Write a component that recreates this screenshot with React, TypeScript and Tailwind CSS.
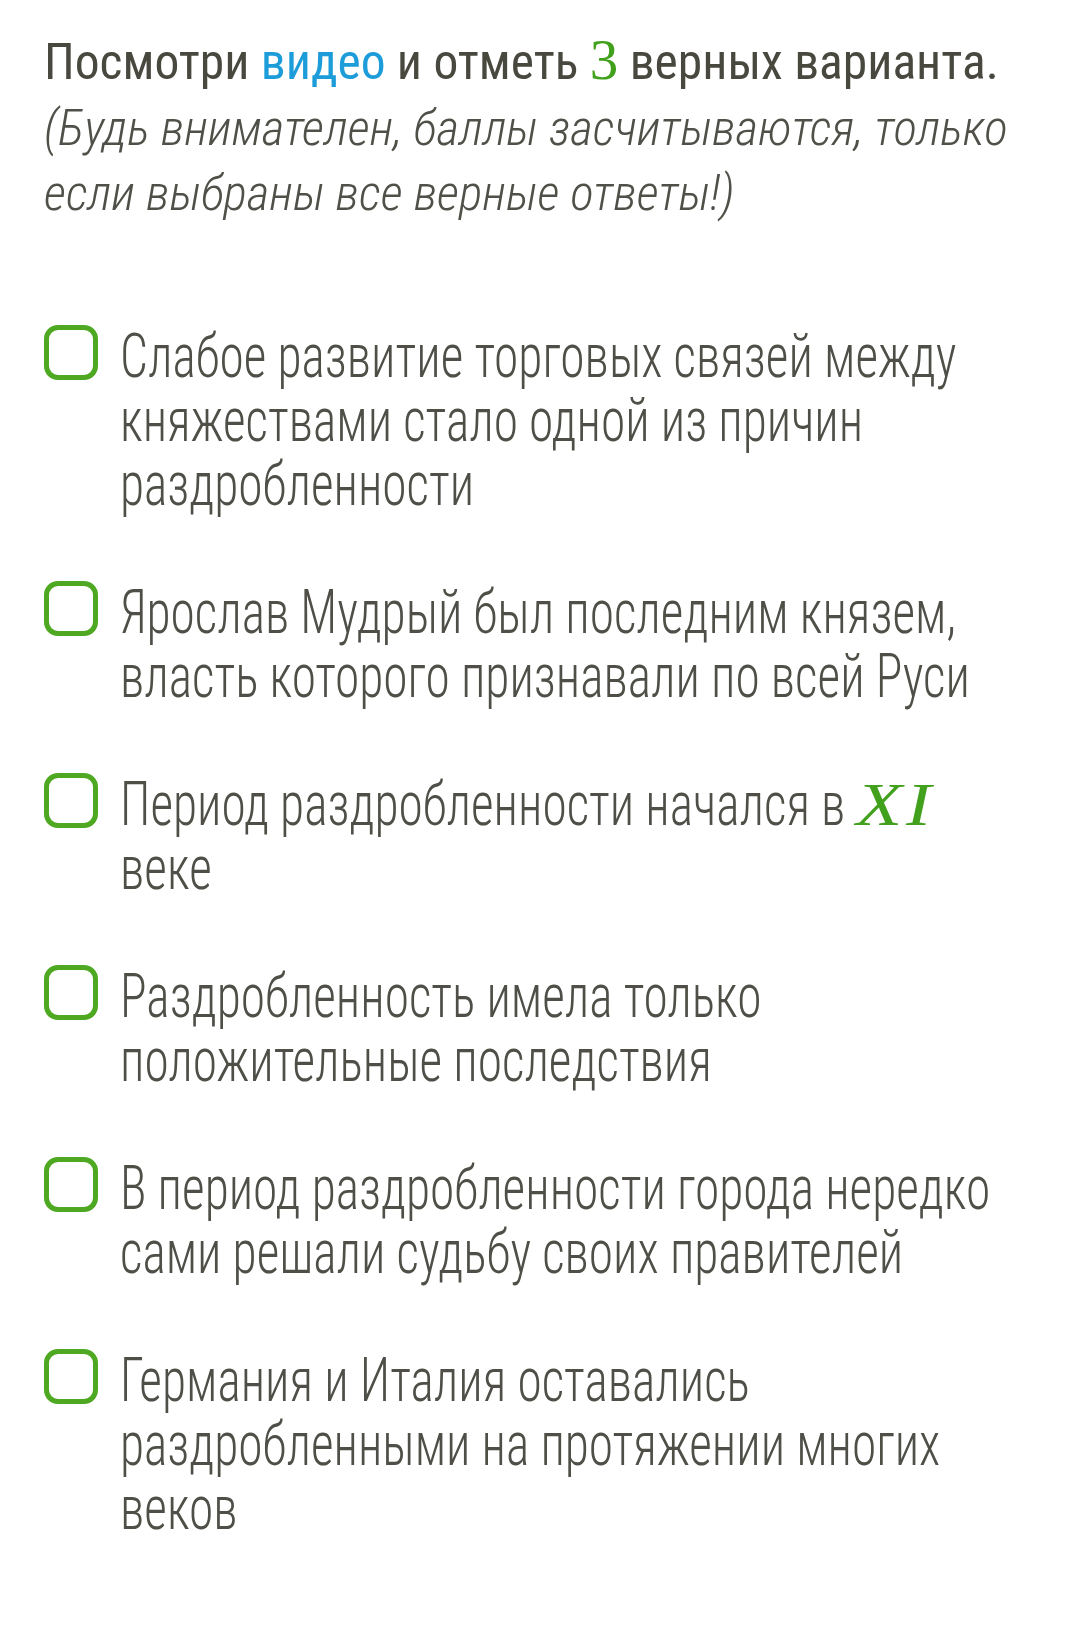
import React from "react";

const options: React.ReactNode[] = [
  <>Слабое развитие торговых связей между<br />княжествами стало одной из причин<br />раздробленности</>,
  <>Ярослав Мудрый был последним князем,<br />власть которого признавали по всей Руси</>,
  <>
    Период раздробленности начался в{" "}
    <span className="inline-block origin-left scale-x-[1.5] font-['Liberation_Serif',serif] italic text-[62px] leading-[0] text-[#41a11c] tracking-[3px]">XI</span>
    <br />веке
  </>,
  <>Раздробленность имела только<br />положительные последствия</>,
  <>В период раздробленности города нередко<br />сами решали судьбу своих правителей</>,
  <>Германия и Италия оставались<br />раздробленными на протяжении многих<br />веков</>,
];

export default function App() {
  return (
    <div className="w-[1080px] min-h-[1626px] overflow-hidden bg-white pl-[44px] pr-[30px] pt-[29px] font-['Roboto_Condensed',Roboto,sans-serif] font-stretch-condensed">
      <div className="text-[49.5px] leading-[67px] text-[#48483f]">
        <p className="whitespace-nowrap">
          Посмотри <span className="text-[#1c9cd8]">видео</span> и отметь{" "}
          <span className="font-['Liberation_Serif',serif] text-[57px] leading-[0] text-[#41a11c]">3</span> верных варианта.
        </p>
        <p className="italic font-light text-[49.3px] leading-[65px] whitespace-nowrap text-[#505049]">
          (Будь внимателен, баллы засчитываются, только
          <br />
          если выбраны все верные ответы!)
        </p>
      </div>
      <div className="mt-[98px] flex flex-col gap-[64px]">
        {options.map((o, i) => (
          <div key={i} className="flex items-start gap-[22px]">
            <div className="mt-[1px] w-[54px] h-[55px] shrink-0 rounded-[14px] border-[5px] border-[#4fa822]" />
            <p className="origin-left scale-x-[0.81] text-[61px] leading-[64px] font-light text-[#4f4f48] whitespace-nowrap">{o}</p>
          </div>
        ))}
      </div>
    </div>
  );
}
